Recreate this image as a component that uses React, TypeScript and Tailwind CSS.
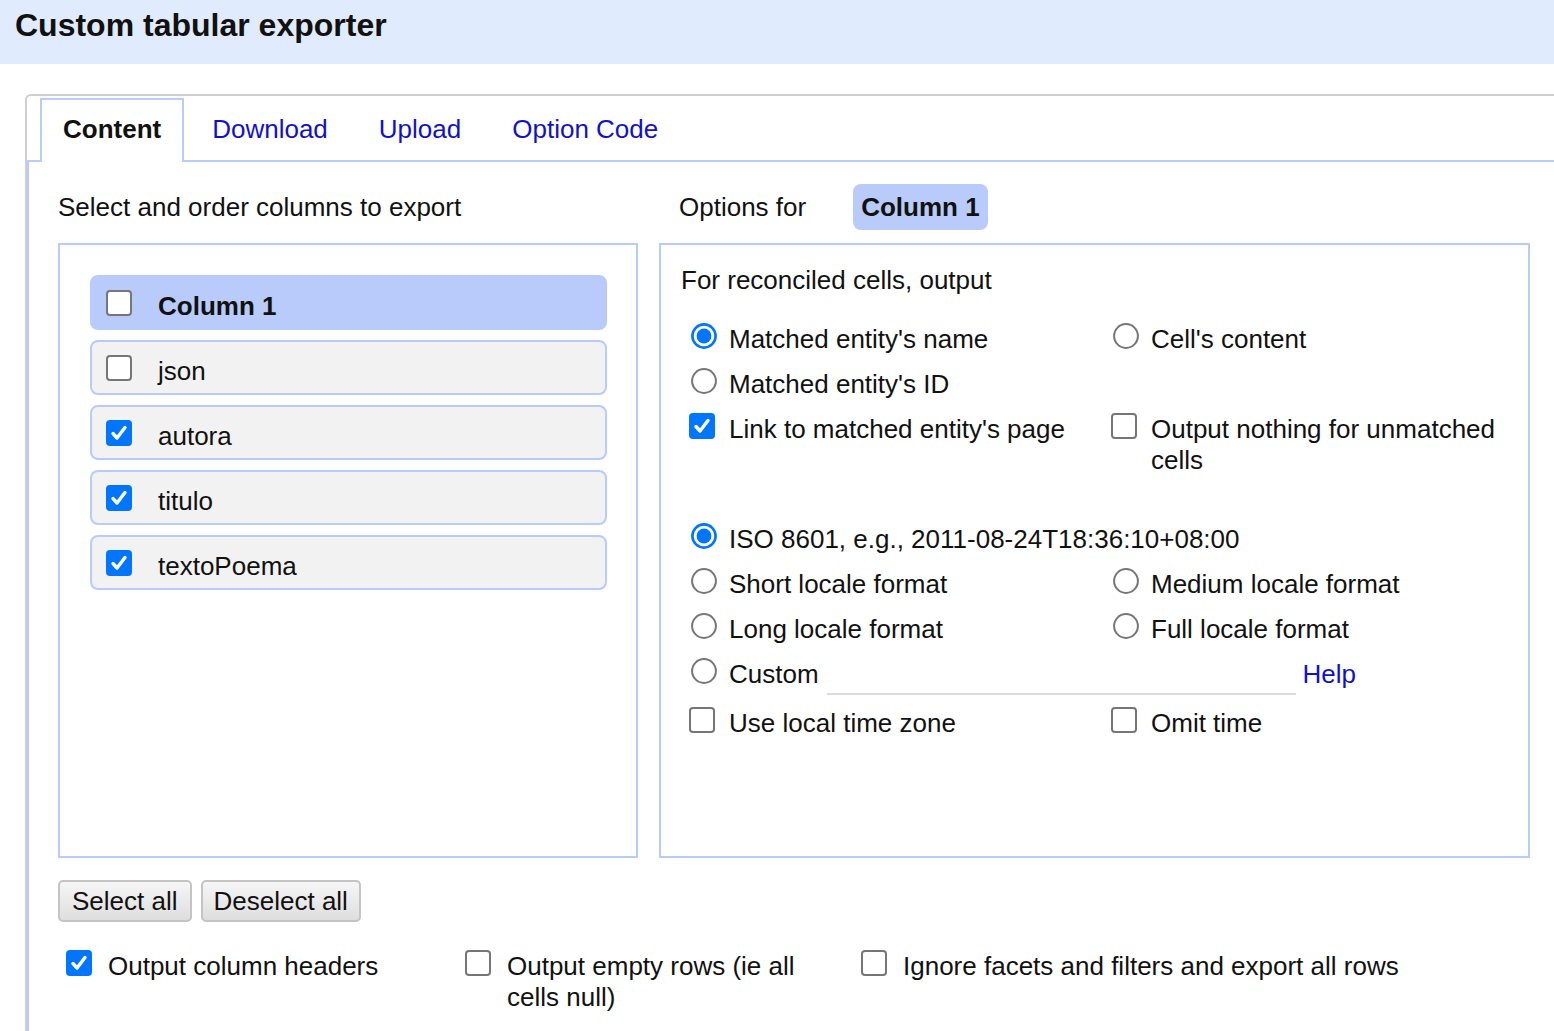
import React from 'react';

const Checkbox = ({ checked = false }: { checked?: boolean }) =>
  checked ? (
    <span className="inline-flex h-[26px] w-[26px] shrink-0 items-center justify-center rounded-[4px] bg-[#0075ff]">
      <svg width="26" height="26" viewBox="0 0 26 26">
        <path
          d="M7 13.5 L11 18 L19 7.5"
          fill="none"
          stroke="white"
          strokeWidth="3.4"
          strokeLinecap="round"
          strokeLinejoin="round"
        />
      </svg>
    </span>
  ) : (
    <span className="inline-block h-[26px] w-[26px] shrink-0 rounded-[4px] border-2 border-[#767676] bg-white" />
  );

const Radio = ({ checked = false }: { checked?: boolean }) => (
  <svg width="26" height="26" viewBox="0 0 26 26" className="shrink-0">
    {checked ? (
      <>
        <circle cx="13" cy="13" r="11.6" fill="white" stroke="#0075ff" strokeWidth="2.6" />
        <circle cx="13" cy="13" r="7.4" fill="#0075ff" />
      </>
    ) : (
      <circle cx="13" cy="13" r="11.9" fill="white" stroke="#767676" strokeWidth="2" />
    )}
  </svg>
);

// one control + label, used in the options grid
const Opt = ({ control, label, box = false }: { control: React.ReactNode; label: string; box?: boolean }) => (
  <div className="flex items-start">
    <span className={box ? 'ml-[8px] mt-[-1px] flex' : 'ml-[10px] mt-[-1px] flex'}>{control}</span>
    <span className={box ? 'ml-[14px]' : 'ml-[12px]'}>{label}</span>
  </div>
);

const columns = [
  { name: 'Column 1', checked: false, selected: true },
  { name: 'json', checked: false, selected: false },
  { name: 'autora', checked: true, selected: false },
  { name: 'titulo', checked: true, selected: false },
  { name: 'textoPoema', checked: true, selected: false },
];

const tabs = ['Content', 'Download', 'Upload', 'Option Code'];

const App = () => {
  return (
    <div className="w-full min-h-screen overflow-hidden bg-white font-['Liberation_Sans',Arial,sans-serif] text-[26px] leading-[30px] text-[#111]">
      <div className="h-[64px] bg-[#e0ebfd] pl-[15px] pt-[7px] text-[32px] leading-[37px] font-bold">
        Custom tabular exporter
      </div>

      <div className="ml-[25px] mt-[30px] w-[1560px] rounded-tl-[6px] border-l-2 border-t-2 border-[#cfcfcf] pt-[2px]">
        {/* tabs */}
        <div className="flex border-b-2 border-[#b8cbfb] pl-[13px]">
          {tabs.map((t, i) =>
            i === 0 ? (
              <div
                key={t}
                className="-mb-[2px] h-[64px] border-2 border-b-0 border-[#b8cbfb] bg-white px-[21px] pt-[14px] font-bold"
              >
                {t}
              </div>
            ) : (
              <div
                key={t}
                className="-mb-[2px] ml-[5px] h-[64px] border-2 border-b-0 border-transparent px-[21px] pt-[14px] text-[#1111cc]"
              >
                {t}
              </div>
            ),
          )}
        </div>

        <div className="border-l-2 border-[#b8cbfb] pl-[29px] pt-[22px] pb-[18px]">
          <div className="flex gap-[21px]">
            {/* column list */}
            <div className="w-[580px]">
              <div className="flex h-[46px] items-center">Select and order columns to export</div>
              <div className="mt-[13px] flex h-[615px] flex-col gap-[10px] border-2 border-[#b8cbfb] pl-[30px] pr-[29px] pt-[30px]">
                {columns.map((c) => (
                  <div
                    key={c.name}
                    className={
                      c.selected
                        ? 'flex h-[55px] items-center rounded-[8px] border-2 border-[#b8cbfb] bg-[#b8cbfb]'
                        : 'flex h-[55px] items-center rounded-[8px] border-2 border-[#b8cbfb] bg-[#f2f2f2]'
                    }
                  >
                    <span className="ml-[14px] flex">
                      <Checkbox checked={c.checked} />
                    </span>
                    <span className={c.selected ? 'ml-[26px] pt-[7px] font-bold' : 'ml-[26px] pt-[7px]'}>{c.name}</span>
                  </div>
                ))}
              </div>
            </div>

            {/* options */}
            <div className="w-[871px]">
              <div className="flex h-[46px] items-center pl-[20px]">
                <span>Options for</span>
                <span className="ml-[47px] flex h-[46px] items-center rounded-[8px] bg-[#b8cbfb] px-[8px] font-bold">
                  Column 1
                </span>
              </div>
              <div className="mt-[13px] h-[615px] border-2 border-[#b8cbfb] pl-[20px] pr-[20px] pt-[20px] leading-[31px]">
                <div>For reconciled cells, output</div>

                <div className="mt-[20px]">
                  <div className="flex pt-[8px] pb-[6px]">
                    <div className="w-[422px]">
                      <Opt control={<Radio checked />} label="Matched entity's name" />
                    </div>
                    <div className="flex-1">
                      <Opt control={<Radio />} label="Cell's content" />
                    </div>
                  </div>
                  <div className="flex pt-[8px] pb-[6px]">
                    <div className="w-[422px]">
                      <Opt control={<Radio />} label="Matched entity's ID" />
                    </div>
                  </div>
                  <div className="flex pt-[8px] pb-[6px]">
                    <div className="w-[422px]">
                      <Opt box control={<Checkbox checked />} label="Link to matched entity's page" />
                    </div>
                    <div className="flex-1">
                      <Opt box control={<Checkbox />} label="Output nothing for unmatched cells" />
                    </div>
                  </div>
                </div>

                <div className="mt-[34px]">
                  <div className="flex pt-[8px] pb-[6px]">
                    <Opt control={<Radio checked />} label="ISO 8601, e.g., 2011-08-24T18:36:10+08:00" />
                  </div>
                  <div className="flex pt-[8px] pb-[6px]">
                    <div className="w-[422px]">
                      <Opt control={<Radio />} label="Short locale format" />
                    </div>
                    <div className="flex-1">
                      <Opt control={<Radio />} label="Medium locale format" />
                    </div>
                  </div>
                  <div className="flex pt-[8px] pb-[6px]">
                    <div className="w-[422px]">
                      <Opt control={<Radio />} label="Long locale format" />
                    </div>
                    <div className="flex-1">
                      <Opt control={<Radio />} label="Full locale format" />
                    </div>
                  </div>
                  <div className="flex items-start pt-[8px] pb-[5px]">
                    <Opt control={<Radio />} label="Custom" />
                    <input
                      type="text"
                      className="ml-[8px] h-[36px] w-[469px] border-b-2 border-[#dcdcdc] bg-transparent outline-none"
                    />
                    <a className="ml-[7px] text-[#1111cc]">Help</a>
                  </div>
                  <div className="flex pt-[8px] pb-[6px]">
                    <div className="w-[422px]">
                      <Opt box control={<Checkbox />} label="Use local time zone" />
                    </div>
                    <div className="flex-1">
                      <Opt box control={<Checkbox />} label="Omit time" />
                    </div>
                  </div>
                </div>
              </div>
            </div>
          </div>

          {/* buttons */}
          <div className="mt-[22px] flex gap-[9px]">
            <button className="h-[42px] rounded-[5px] border-2 border-[#c4c4c4] bg-gradient-to-b from-[#f6f6f6] to-[#dedede] px-[12px] leading-[38px]">
              Select all
            </button>
            <button className="h-[42px] rounded-[5px] border-2 border-[#c4c4c4] bg-gradient-to-b from-[#f6f6f6] to-[#dedede] px-[11px] leading-[38px]">
              Deselect all
            </button>
          </div>

          <div className="mt-[29px] flex leading-[31px]">
            <div className="flex w-[399px] items-start">
              <span className="ml-[8px] mt-[-1px] flex">
                <Checkbox checked />
              </span>
              <span className="ml-[16px]">Output column headers</span>
            </div>
            <div className="flex w-[396px] items-start">
              <span className="ml-[8px] mt-[-1px] flex">
                <Checkbox />
              </span>
              <span className="ml-[16px] max-w-[320px]">Output empty rows (ie all cells null)</span>
            </div>
            <div className="flex items-start">
              <span className="ml-[8px] mt-[-1px] flex">
                <Checkbox />
              </span>
              <span className="ml-[16px]">Ignore facets and filters and export all rows</span>
            </div>
          </div>
        </div>
      </div>
    </div>
  );
};

export default App;
